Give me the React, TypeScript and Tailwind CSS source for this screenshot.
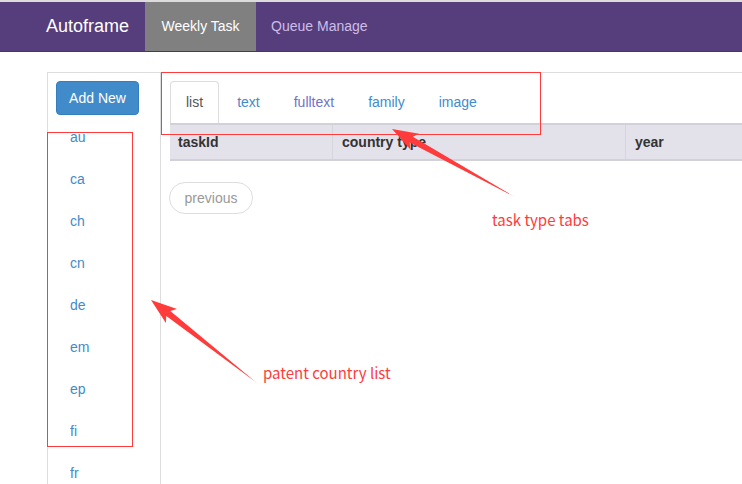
import React from "react";

function arrowPoints(tx: number, ty: number, px: number, py: number, headLen = 22, headHalf = 9, shaftHalf = 3.2) {
  const dx = px - tx;
  const dy = py - ty;
  const len = Math.hypot(dx, dy);
  const ux = dx / len;
  const uy = dy / len;
  const nx = -uy;
  const ny = ux;
  const bx = px - headLen * ux;
  const by = py - headLen * uy;
  const notch = 4;
  const wx = bx - notch * ux;
  const wy = by - notch * uy;
  const pts = [
    [tx, ty],
    [bx + shaftHalf * nx, by + shaftHalf * ny],
    [wx + headHalf * nx, wy + headHalf * ny],
    [px, py],
    [wx - headHalf * nx, wy - headHalf * ny],
    [bx - shaftHalf * nx, by - shaftHalf * ny],
  ];
  return pts.map((p) => p.map((v) => v.toFixed(1)).join(",")).join(" ");
}

const countries = ["au", "ca", "ch", "cn", "de", "em", "ep", "fi", "fr"];

export default function App() {
  return (
    <div
      className="relative w-[742px] h-[484px] overflow-hidden bg-white"
      style={{ fontFamily: '"Liberation Sans", Arial, sans-serif' }}
    >
      <div className="h-[2px] bg-[#dcdcdc]" />
      <nav className="flex h-[50px] items-stretch bg-[#563d7c] border-b border-[#4a3470]">
        <div className="flex items-center pl-[46px] pr-[16px] text-[18px] text-white">Autoframe</div>
        <div className="flex w-[111px] items-center justify-center bg-[#808080] text-[14px] text-white">Weekly Task</div>
        <div className="flex items-center px-[15px] text-[14px] text-[#cdbdea]">Queue Manage</div>
      </nav>

      <div className="ml-[47px] mt-[20px] flex h-[500px] border-l border-t border-[#dddddd]">
        <aside className="w-[113px] shrink-0 border-r border-[#dddddd] pl-[8px] pt-[8px]">
          <div className="flex h-[34px] w-[83px] items-center justify-center rounded-[4px] bg-[#428bca] text-[14px] text-white border border-[#357ebd]">
            Add New
          </div>
          <ul className="mt-[1px]">
            {countries.map((c) => (
              <li key={c} className="flex h-[42px] items-center pl-[14px] text-[14px] text-[#428bca]">
                {c}
              </li>
            ))}
          </ul>
        </aside>

        <main className="min-w-0 flex-1 pl-[9px] pt-[8px]">
          <ul className="flex h-[42px] items-end text-[14px]">
            <li className="flex h-[42px] items-center rounded-t-[4px] border border-b-0 border-[#dddddd] bg-white px-[15px] text-[#555555]">
              list
            </li>
            <li className="ml-[2px] flex h-[42px] items-center px-[16px] text-[#428bca]">text</li>
            <li className="ml-[2px] flex h-[42px] items-center px-[16px] text-[#6f73c9]">fulltext</li>
            <li className="ml-[2px] flex h-[42px] items-center px-[16px] text-[#428bca]">family</li>
            <li className="ml-[2px] flex h-[42px] items-center px-[16px] text-[#428bca]">image</li>
          </ul>
          <div className="flex h-[38px] w-[700px] items-stretch border-t-2 border-b-2 border-[#d3d1d8] bg-[#e3e1ea] text-[14px] font-bold text-[#333333]">
            <div className="flex w-[163px] items-center border-r border-[#d7d5dc] pl-[8px]">taskId</div>
            <div className="flex w-[293px] items-center border-r border-[#d7d5dc] pl-[9px]">country type</div>
            <div className="flex flex-1 items-center pl-[9px]">year</div>
          </div>
          <div className="-ml-[1px] mt-[21px] flex h-[32px] w-[84px] items-center justify-center rounded-full border border-[#dddddd] text-[14px] text-[#999999]">
            previous
          </div>
        </main>
      </div>

      {/* annotations */}
      <div className="pointer-events-none absolute left-[47px] top-[132px] h-[315px] w-[86px] border border-[#ff3b3b]" />
      <div className="pointer-events-none absolute left-[161px] top-[72px] h-[63px] w-[380px] border border-[#ff3b3b]" />
      <svg className="pointer-events-none absolute left-0 top-0" width="742" height="484">
        <polygon points={arrowPoints(515, 197, 392, 129)} fill="#ff3b3b" />
        <polygon points={arrowPoints(257, 383, 151, 300)} fill="#ff3b3b" />
      </svg>
      <div
        className="absolute left-[492px] top-[209px] text-[15px] leading-[22px] text-[#ff3b3b]"
        style={{ fontFamily: '"Noto Sans CJK SC", "Noto Sans", sans-serif' }}
      >
        task type tabs
      </div>
      <div
        className="absolute left-[263px] top-[362px] text-[15px] leading-[22px] text-[#ff3b3b]"
        style={{ fontFamily: '"Noto Sans CJK SC", "Noto Sans", sans-serif' }}
      >
        patent country list
      </div>
    </div>
  );
}
